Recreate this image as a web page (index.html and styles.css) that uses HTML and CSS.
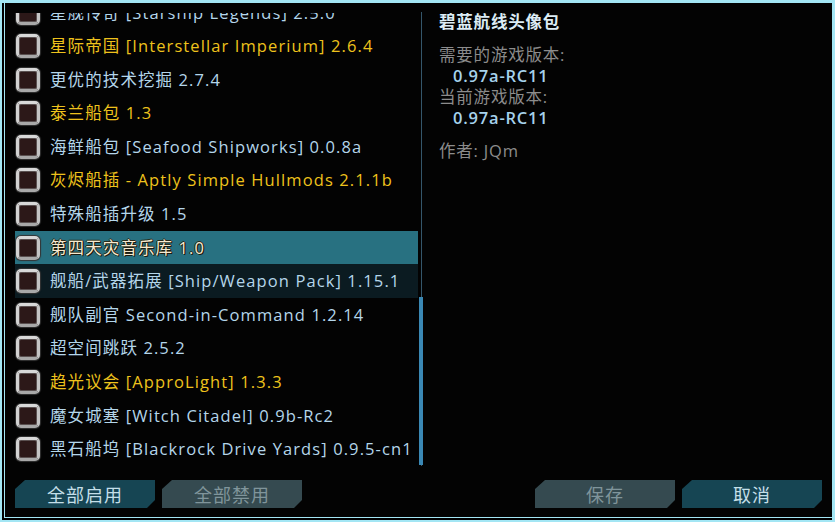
FILE: index.html
```html
<!DOCTYPE html>
<html lang="zh">
<head>
<meta charset="utf-8">
<title>Mod 管理</title>
<link rel="stylesheet" href="styles.css">
</head>
<body>
<div class="window">
  <div class="main">
    <div class="list-wrap">
      <div class="list">
        <div class="list-inner">
          <div class="row blue"><span class="cb"></span><span class="name">星舰传奇 [Starship Legends] 2.5.0</span></div>
          <div class="row yellow"><span class="cb"></span><span class="name">星际帝国 [Interstellar Imperium] 2.6.4</span></div>
          <div class="row blue"><span class="cb"></span><span class="name">更优的技术挖掘 2.7.4</span></div>
          <div class="row yellow"><span class="cb"></span><span class="name">泰兰船包 1.3</span></div>
          <div class="row blue"><span class="cb"></span><span class="name">海鲜船包 [Seafood Shipworks] 0.0.8a</span></div>
          <div class="row yellow"><span class="cb"></span><span class="name">灰烬船插 - Aptly Simple Hullmods 2.1.1b</span></div>
          <div class="row blue"><span class="cb"></span><span class="name">特殊船插升级 1.5</span></div>
          <div class="row selected"><span class="cb"></span><span class="name">第四天灾音乐库 1.0</span></div>
          <div class="row blue hover"><span class="cb"></span><span class="name">舰船/武器拓展 [Ship/Weapon Pack] 1.15.1</span></div>
          <div class="row blue"><span class="cb"></span><span class="name">舰队副官 Second-in-Command 1.2.14</span></div>
          <div class="row blue"><span class="cb"></span><span class="name">超空间跳跃 2.5.2</span></div>
          <div class="row yellow"><span class="cb"></span><span class="name">趋光议会 [ApproLight] 1.3.3</span></div>
          <div class="row blue"><span class="cb"></span><span class="name">魔女城塞 [Witch Citadel] 0.9b-Rc2</span></div>
          <div class="row blue"><span class="cb"></span><span class="name">黑石船坞 [Blackrock Drive Yards] 0.9.5-cn1</span></div>
        </div>
      </div>
      <div class="scrollbar"><div class="track"></div><div class="thumb"></div></div>
    </div>
    <div class="info">
      <div class="title">碧蓝航线头像包</div>
      <div class="label gap">需要的游戏版本:</div>
      <div class="value">0.97a-RC11</div>
      <div class="label">当前游戏版本:</div>
      <div class="value">0.97a-RC11</div>
      <div class="label gap">作者: JQm</div>
    </div>
  </div>
  <div class="buttons">
    <div class="group">
      <div class="btn on">全部启用</div>
      <div class="btn off">全部禁用</div>
    </div>
    <div class="group">
      <div class="btn off">保存</div>
      <div class="btn on">取消</div>
    </div>
  </div>
</div>
</body>
</html>
```

FILE: styles.css
```css
html, body {
  margin: 0;
  padding: 0;
  background: #000;
}

.window {
  width: 835px;
  height: 522px;
  box-sizing: border-box;
  border: 2px solid #a3e6f4;
  border-top-width: 3px;
  border-right-width: 3px;
  background: #030303;
  box-shadow: inset 2px -2px 0 0 #000, inset 3px -3px 0 0 #a3e6f4;
  font-family: "Open Sans", "Noto Sans CJK SC", sans-serif;
  overflow: hidden;
}

.main {
  display: flex;
  height: 463px;
}

.list-wrap {
  display: flex;
  margin-left: 13px;
  height: 463px;
}

.list {
  width: 403px;
  height: 453px;
  margin-top: 10px;
  overflow: hidden;
}

.list-inner {
  margin-top: -17.3px;
}

.row {
  display: flex;
  align-items: center;
  height: 33.6px;
  padding-left: 1px;
  font-size: 16.5px;
  letter-spacing: 1.1px;
  white-space: nowrap;
}

.row .name {
  margin-left: 10px;
  line-height: 20px;
}

.blue { color: #b4d6ea; }
.yellow { color: #eec21c; }

.selected {
  background: #287181;
  color: #f6ead0;
}
.selected .name {
  text-shadow: 1px 1px 0 #1a1a10, -1px 0 0 #2a2a1a, 0 -1px 0 #2a2a1a, 1px 0 0 #1a1a10;
}

.hover {
  background: #0b1b21;
}

.cb {
  flex: none;
  width: 18px;
  height: 18px;
  border: 3px solid #c4c4c4;
  border-top-color: #d8d8d8;
  border-left-color: #d2d2d2;
  border-bottom-color: #a8a8a8;
  border-radius: 5px;
  background:
    radial-gradient(circle, #4c3030 40%, transparent 45%) 0 0 / 2px 2px,
    #2c1818;
  box-shadow: inset 0 0 0 1px #5a5050, 0 0 1px 1px #333;
}

.scrollbar {
  position: relative;
  width: 5px;
  margin-left: 1px;
}

.track {
  position: absolute;
  left: 2px;
  top: 9px;
  bottom: 0;
  width: 1px;
  background: #34566a;
}

.thumb {
  position: absolute;
  left: 0;
  top: 294px;
  bottom: 1px;
  width: 4px;
  background: #3a88b4;
}

.info {
  padding: 8px 0 0 15px;
  font-size: 16.5px;
  letter-spacing: 0.8px;
  line-height: 21px;
}

.title {
  color: #dcecf4;
  font-weight: bold;
}

.label {
  color: #8c8c8c;
}

.label.gap {
  margin-top: 12px;
}

.value {
  color: #a6d2ec;
  padding-left: 14px;
  font-weight: 600;
}

.buttons {
  display: flex;
  justify-content: space-between;
  margin-top: 14px;
  padding: 0 10px 0 13px;
}

.group {
  display: flex;
  gap: 7px;
}

.btn {
  width: 140px;
  height: 28px;
  display: flex;
  align-items: center;
  justify-content: center;
  font-family: "Noto Sans CJK SC", sans-serif;
  font-size: 18px;
  letter-spacing: 1px;
  clip-path: polygon(10px 0, 100% 0, 100% calc(100% - 8px), calc(100% - 8px) 100%, 0 100%, 0 9px);
}

.btn.on {
  background: #164553;
  color: #c4dfe8;
}

.btn.off {
  background: #354a50;
  color: #80959b;
}
```
